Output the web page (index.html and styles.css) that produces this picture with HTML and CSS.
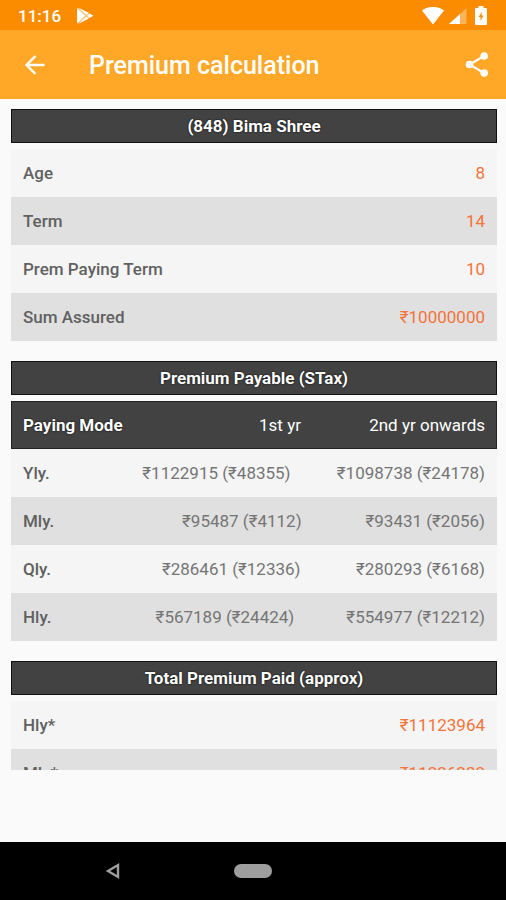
FILE: index.html
```html
<!DOCTYPE html>
<html lang="en">
<head>
<meta charset="utf-8">
<meta name="viewport" content="width=device-width, initial-scale=1">
<title>Premium calculation</title>
<link rel="stylesheet" href="styles.css">
</head>
<body>
<div class="status">
  <span class="clock">11:16</span>
  <svg class="play" viewBox="0 0 18 18" width="18" height="18" aria-hidden="true">
    <path d="M1 1v15.500l8-7.700zM2 .5l8.500 7.200 2.200-1.900zM2 17l8.500-7.200 2.200 1.900zM11.300 8.800l2.200-2.300 4 2.300-4 2.300z" fill="#fff"/>
    <path d="M1 1L12.500 6.500 17 8.800 12.500 11 1 16.500z" fill="#fff" opacity=".5"/>
  </svg>
  <div class="status-icons">
    <svg viewBox="0 0 22 18" width="22" height="18" aria-hidden="true"><path d="M0 3.500C6-1.200 16-1.200 22 3.500L11 17.500z" fill="#fff"/></svg>
    <svg class="signal" viewBox="0 0 18 18" width="18" height="18" aria-hidden="true"><path d="M17.500 1v16H0z" fill="#fff" opacity=".35"/><path d="M11 7v10H0z" fill="#fff"/></svg>
    <svg class="battery" viewBox="0 0 12 20" width="12" height="20" aria-hidden="true"><path d="M3.500 0h5v2H11q1 0 1 1v15q0 1-1 1H1q-1 0-1-1V3q0-1 1-1h2.500z" fill="#fff"/><path d="M7 5.500L3.500 11h2v4L8.500 9.500h-2z" fill="#fb8c00"/></svg>
  </div>
</div>
<header class="appbar">
  <button class="icon-button" aria-label="Back">
    <svg viewBox="0 0 20 20" width="20" height="20"><path d="M19.500 10H2M10.500 1L1.500 10l9 9" fill="none" stroke="#fff" stroke-width="2.400"/></svg>
  </button>
  <h1>Premium calculation</h1>
  <button class="icon-button" aria-label="Share">
    <svg viewBox="0 0 24 26" width="24" height="26"><path d="M19 4L4.500 12.500 19 21" fill="none" stroke="#fff" stroke-width="2.200"/><g fill="#fff"><circle cx="19.200" cy="4" r="3.800"/><circle cx="4.500" cy="12.500" r="3.800"/><circle cx="19.200" cy="21" r="3.800"/></g></svg>
  </button>
</header>
<main class="scroll">
  <section>
    <h2>(848) Bima Shree</h2>
    <table class="pairs">
      <tbody>
        <tr><th scope="row">Age</th><td>8</td></tr>
        <tr><th scope="row">Term</th><td>14</td></tr>
        <tr><th scope="row">Prem Paying Term</th><td>10</td></tr>
        <tr><th scope="row">Sum Assured</th><td>₹10000000</td></tr>
      </tbody>
    </table>
  </section>
  <section>
    <h2>Premium Payable (STax)</h2>
    <table class="modes">
      <thead>
        <tr><th scope="col">Paying Mode</th><th scope="col">1st yr</th><th scope="col">2nd yr onwards</th></tr>
      </thead>
      <tbody>
        <tr><th scope="row">Yly.</th><td>₹1122915 (₹48355)</td><td>₹1098738 (₹24178)</td></tr>
        <tr><th scope="row">Mly.</th><td>₹95487 (₹4112)</td><td>₹93431 (₹2056)</td></tr>
        <tr><th scope="row">Qly.</th><td>₹286461 (₹12336)</td><td>₹280293 (₹6168)</td></tr>
        <tr><th scope="row">Hly.</th><td>₹567189 (₹24424)</td><td>₹554977 (₹12212)</td></tr>
      </tbody>
    </table>
  </section>
  <section>
    <h2>Total Premium Paid (approx)</h2>
    <table class="pairs">
      <tbody>
        <tr><th scope="row">Hly*</th><td>₹11123964</td></tr>
        <tr><th scope="row">Mly*</th><td>₹11226232</td></tr>
      </tbody>
    </table>
  </section>
</main>
<nav class="navbar">
  <button class="nav-back" aria-label="System back"><svg viewBox="0 0 16 18" width="16" height="18"><path d="M13 3v12L3 9z" fill="none" stroke="#9e9e9e" stroke-width="2.400"/></svg></button>
  <button class="nav-home" aria-label="Home"></button>
</nav>
</body>
</html>
```
FILE: styles.css
```css
* { box-sizing: border-box; }

body {
  margin: 0;
  height: 100vh;
  display: flex;
  flex-direction: column;
  background: #fafafa;
  color: #616161;
  font-family: Roboto, "Liberation Sans", sans-serif;
  font-size: 17px;
  line-height: 20px;
}

button {
  border: 0;
  padding: 0;
  background: none;
}

svg { display: block; }

.status {
  display: flex;
  align-items: center;
  height: 30px;
  padding: 2px 19px 0 18px;
  background: #fb8c00;
  color: #fff;
  flex: none;
}

.clock { font-weight: 500; }

.play { margin-left: 15px; }

.status-icons {
  display: flex;
  align-items: center;
  margin-left: auto;
}

.signal { margin-left: 5px; }

.battery { margin-left: 8px; }

.appbar {
  display: flex;
  align-items: center;
  height: 69px;
  padding: 0 17px 0 25px;
  background: #ffa726;
  color: #fff;
  flex: none;
}

h1 {
  flex: 1;
  margin: 0 0 0 44px;
  padding-top: 2px;
  font-size: 25px;
  line-height: 32px;
  font-weight: 500;
}

.scroll {
  flex: 1;
  min-height: 0;
  overflow: hidden;
  margin-bottom: 72px;
  padding: 10px 9px 0 11px;
}

section { margin-bottom: 20px; }

h2 {
  margin: 0 0 6px;
  padding: 6px 0;
  border: 1px solid #111;
  background: #424242;
  color: #fff;
  font-size: 17px;
  line-height: 20px;
  font-weight: 700;
  text-align: center;
  text-shadow: 0 0 2px #000;
}

table, thead, tbody { display: block; }

/* Cells keep their text width and share the free space equally. */
tr {
  display: flex;
  align-items: center;
  height: 48px;
  padding: 0 12px;
  background: #f5f5f5;
}

tbody tr:nth-child(even) { background: #e0e0e0; }

th, td {
  padding: 0;
  flex: 1 1 auto;
  text-align: right;
  font-weight: 400;
  white-space: nowrap;
}

th:first-child {
  text-align: left;
  font-weight: 500;
}

td { color: #757575; }

.pairs td { color: #f4733a; }

.modes thead tr {
  background: #424242;
  border: 1px solid #222;
  padding: 0 11px;
  color: #fff;
}

.modes thead th:first-child {
  font-weight: 700;
  text-shadow: 0 0 2px #000;
}

.navbar {
  display: grid;
  grid-template-columns: 1fr auto 1fr;
  align-items: center;
  height: 58px;
  background: #000;
  flex: none;
}

.nav-back {
  justify-self: center;
  margin-right: 8px;
}

.nav-home {
  width: 38px;
  height: 14px;
  border-radius: 7px;
  background: #9e9e9e;
}
```
